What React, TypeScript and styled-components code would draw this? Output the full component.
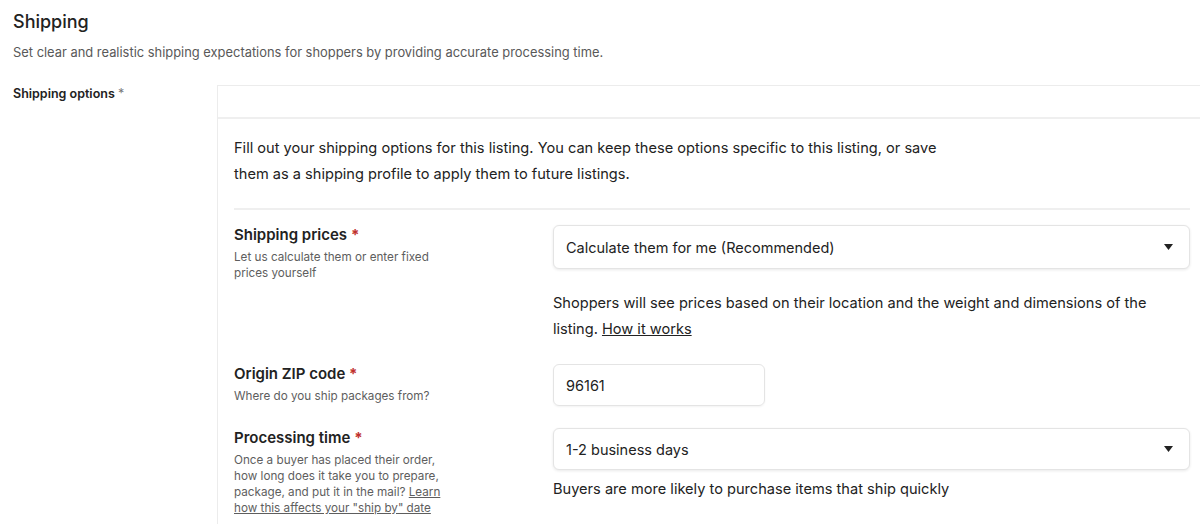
import React from "react";
import styled, { createGlobalStyle } from "styled-components";

const Global = createGlobalStyle`
  html, body { margin: 0; padding: 0; background: #ffffff; }
  body { overflow: hidden; font-family: Inter, "Noto Sans", Arial, sans-serif; color: #222222; }
  * { box-sizing: border-box; }
`;

const Page = styled.div`
  width: 1200px;
  height: 524px;
  overflow: hidden;
  padding: 10px 0 0 13px;
`;

const Title = styled.h2`
  margin: 0;
  font-size: 18px;
  line-height: 24px;
  font-weight: 500;
  color: #222222;
`;

const Subtitle = styled.p`
  margin: 10px 0 0;
  font-size: 12.9px;
  line-height: 18px;
  color: #595959;
`;

const Section = styled.div`
  display: grid;
  grid-template-columns: 204px 989px;
  margin-top: 23px;
`;

const SectionLabel = styled.div`
  font-size: 12.5px;
  font-weight: 600;
  line-height: 18px;
  color: #222222;
`;

const Asterisk = styled.span<{ $red?: boolean }>`
  color: ${(p) => (p.$red ? "#c0302b" : "#777777")};
  font-weight: ${(p) => (p.$red ? 700 : 400)};
`;

const Box = styled.div`
  border: 1px solid #ececec;
  border-right: none;
  border-bottom: none;
  height: 460px;
`;

const BoxHeader = styled.div`
  height: 33px;
  border-bottom: 2px solid #efefef;
`;

const BoxBody = styled.div`
  padding: 16px 17px 0 16px;
  width: 989px;
`;

const Intro = styled.p`
  margin: 0;
  font-size: 14.6px;
  line-height: 26px;
  color: #222222;
  max-width: 720px;
`;

const Divider = styled.hr`
  border: none;
  border-top: 2px solid #efefef;
  margin: 21px 0 15px;
`;

const Rows = styled.div`
  display: grid;
  grid-template-columns: 319px 1fr;
  row-gap: 22px;
`;

const LabelCol = styled.div`
  display: flex;
  flex-direction: column;
`;

const FieldTitle = styled.div`
  font-size: 15px;
  line-height: 20px;
  font-weight: 600;
  color: #222222;
`;

const FieldHint = styled.div`
  margin-top: 4px;
  font-size: 11.7px;
  line-height: 16px;
  color: #5e5e5e;
  max-width: 222px;
`;

const HintLink = styled.a`
  color: #5e5e5e;
  text-decoration: underline;
`;

const ControlCol = styled.div`
  display: flex;
  flex-direction: column;
`;

const Select = styled.div<{ $h: number }>`
  display: flex;
  align-items: center;
  justify-content: space-between;
  height: ${(p) => p.$h}px;
  padding: 0 16px 0 12px;
  border: 1px solid #e4e4e4;
  border-radius: 6px;
  box-shadow: 0 1px 3px rgba(0, 0, 0, 0.09);
  background: #ffffff;
  font-size: 14.5px;
  color: #222222;
`;

const Caret = styled.svg`
  width: 9px;
  height: 6px;
  display: block;
`;

const Input = styled.div`
  display: flex;
  align-items: center;
  width: 212px;
  height: 42px;
  padding: 0 12px;
  border: 1px solid #e4e4e4;
  border-radius: 6px;
  box-shadow: 0 1px 2px rgba(0, 0, 0, 0.05);
  font-size: 14.5px;
  color: #222222;
`;

const Help = styled.p<{ $mt: number }>`
  margin: ${(p) => p.$mt}px 0 0;
  font-size: 14.6px;
  line-height: 26px;
  color: #222222;
  max-width: 620px;
`;

const HelpLink = styled.a`
  color: #222222;
  text-decoration: underline;
`;

const Dropdown: React.FC<{ value: string; h: number }> = ({ value, h }) => (
  <Select $h={h}>
    <span>{value}</span>
    <Caret viewBox="0 0 9 6">
      <path d="M0 0 L9 0 L4.5 6 Z" fill="#222222" />
    </Caret>
  </Select>
);

export default function App() {
  return (
    <>
      <Global />
      <Page>
        <Title>Shipping</Title>
        <Subtitle>
          Set clear and realistic shipping expectations for shoppers by providing accurate processing time.
        </Subtitle>
        <Section>
          <SectionLabel>
            Shipping options <Asterisk>*</Asterisk>
          </SectionLabel>
          <Box>
            <BoxHeader />
            <BoxBody>
              <Intro>
                Fill out your shipping options for this listing. You can keep these options specific to this listing, or save
                them as a shipping profile to apply them to future listings.
              </Intro>
              <Divider />
              <Rows>
                <LabelCol>
                  <FieldTitle>
                    Shipping prices <Asterisk $red>*</Asterisk>
                  </FieldTitle>
                  <FieldHint>Let us calculate them or enter fixed prices yourself</FieldHint>
                </LabelCol>
                <ControlCol>
                  <Dropdown value="Calculate them for me (Recommended)" h={44} />
                  <Help $mt={21}>
                    Shoppers will see prices based on their location and the weight and dimensions of the listing.{" "}
                    <HelpLink href="#">How it works</HelpLink>
                  </Help>
                </ControlCol>

                <LabelCol>
                  <FieldTitle>
                    Origin ZIP code <Asterisk $red>*</Asterisk>
                  </FieldTitle>
                  <FieldHint>Where do you ship packages from?</FieldHint>
                </LabelCol>
                <ControlCol>
                  <Input>96161</Input>
                </ControlCol>

                <LabelCol>
                  <FieldTitle>
                    Processing time <Asterisk $red>*</Asterisk>
                  </FieldTitle>
                  <FieldHint>
                    Once a buyer has placed their order, how long does it take you to prepare, package, and put it in the mail?{" "}
                    <HintLink href="#">Learn how this affects your "ship by" date</HintLink>
                  </FieldHint>
                </LabelCol>
                <ControlCol>
                  <Dropdown value="1-2 business days" h={42} />
                  <Help $mt={6}>Buyers are more likely to purchase items that ship quickly</Help>
                </ControlCol>
              </Rows>
            </BoxBody>
          </Box>
        </Section>
      </Page>
    </>
  );
}
